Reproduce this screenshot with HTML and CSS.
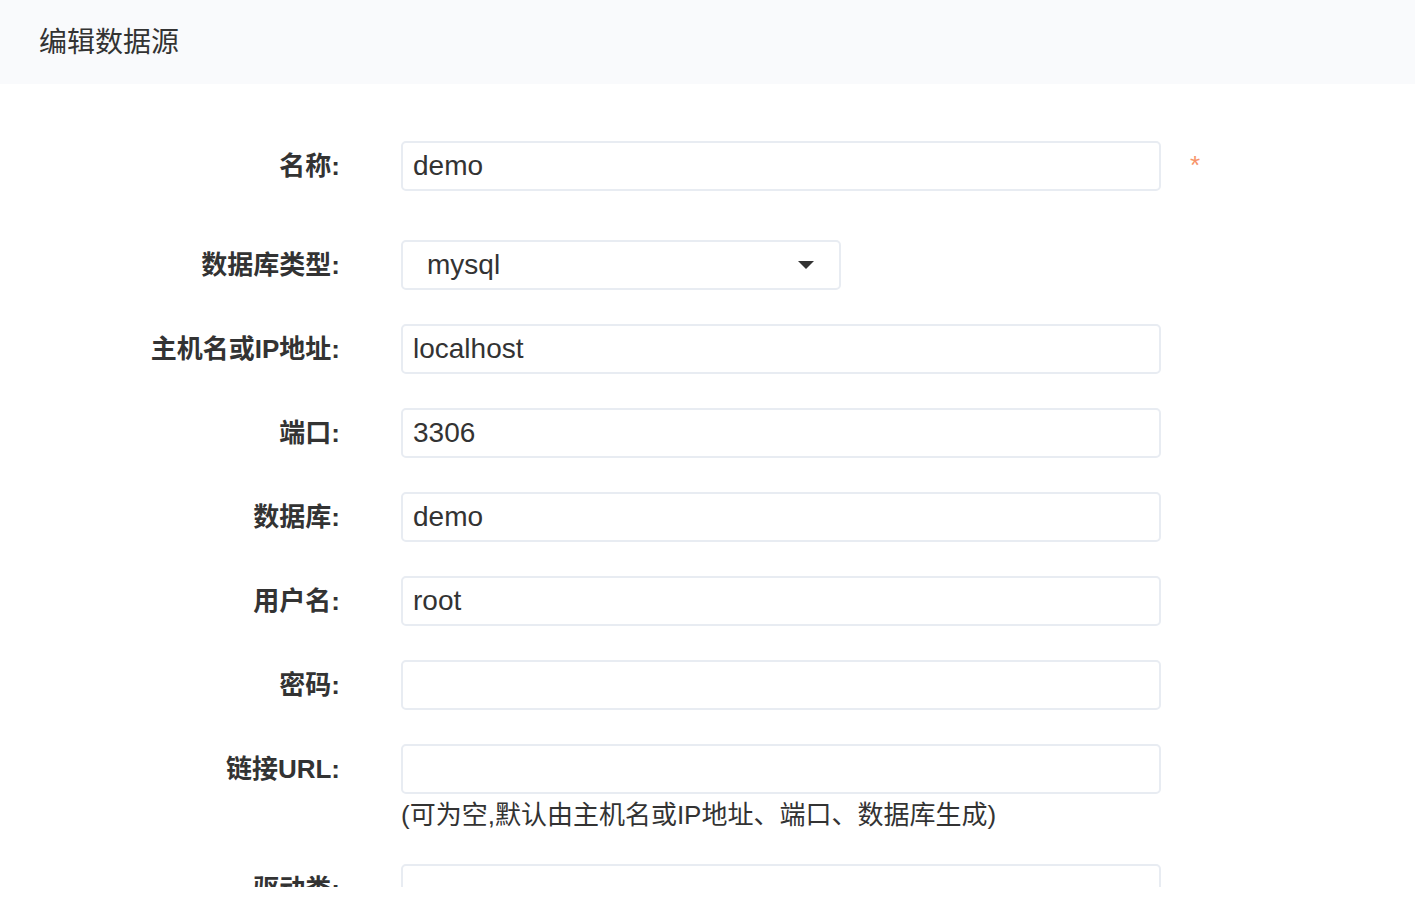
FILE: index.html
```html
<!DOCTYPE HTML>
<HTML>
	<HEAD>
		<meta charset="utf-8">
		<link rel="stylesheet" href="styles.css">
		<TITLE>编辑数据源</TITLE>
	</HEAD>
	<BODY>
		<DIV class="page">
			<DIV class="header">编辑数据源</DIV>
			<FORM class="form">
				<DIV class="row first">
					<label class="label">名称:</label>
					<input class="field" type="text" value="demo">
					<span class="required">*</span>
				</DIV>
				<DIV class="row">
					<label class="label">数据库类型:</label>
					<DIV class="select">
						<span>mysql</span>
						<span class="caret"></span>
					</DIV>
				</DIV>
				<DIV class="row">
					<label class="label">主机名或IP地址:</label>
					<input class="field" type="text" value="localhost">
				</DIV>
				<DIV class="row">
					<label class="label">端口:</label>
					<input class="field" type="text" value="3306">
				</DIV>
				<DIV class="row">
					<label class="label">数据库:</label>
					<input class="field" type="text" value="demo">
				</DIV>
				<DIV class="row">
					<label class="label">用户名:</label>
					<input class="field" type="text" value="root">
				</DIV>
				<DIV class="row">
					<label class="label">密码:</label>
					<input class="field" type="password" value="">
				</DIV>
				<DIV class="row">
					<label class="label">链接URL:</label>
					<input class="field" type="text" value="">
				</DIV>
				<DIV class="help">(可为空,默认由主机名或IP地址、端口、数据库生成)</DIV>
				<DIV class="row">
					<label class="label">驱动类:</label>
					<input class="field" type="text" value="">
				</DIV>
			</FORM>
		</DIV>
	</BODY>
</HTML>
```

FILE: styles.css
```css
body {
	margin: 0;
	background-color: #ffffff;
	font-family: "Liberation Sans", "Noto Sans CJK SC", sans-serif;
	color: #333333;
}

div.page {
	height: 887px;
	overflow: hidden;
}

div.header {
	height: 84px;
	padding-left: 39px;
	background-color: #f9fafc;
	font-family: "Noto Sans CJK SC", sans-serif;
	font-size: 28px;
	line-height: 81px;
	color: #333333;
}

form.form {
	padding-top: 57px;
}

div.row {
	display: flex;
	align-items: center;
	margin-bottom: 34px;
}

div.row.first {
	margin-bottom: 49px;
}

label.label {
	width: 340px;
	margin-right: 61px;
	padding-bottom: 5px;
	text-align: right;
	font-size: 26px;
	font-weight: bold;
	color: #333333;
}

input.field {
	box-sizing: border-box;
	width: 760px;
	height: 50px;
	margin: 0;
	padding: 0 10px;
	border: 2px solid #e8ecf2;
	border-radius: 5px;
	font-family: "Liberation Sans", sans-serif;
	font-size: 28px;
	color: #333333;
	background-color: #ffffff;
	outline: none;
}

span.required {
	margin-left: 29px;
	margin-top: -2px;
	font-size: 26px;
	line-height: 26px;
	color: #f7946a;
}

div.select {
	box-sizing: border-box;
	display: flex;
	align-items: center;
	justify-content: space-between;
	width: 440px;
	height: 50px;
	padding: 0 25px 0 24px;
	border: 2px solid #e8ecf2;
	border-radius: 5px;
	font-size: 28px;
	color: #333333;
}

span.caret {
	width: 0;
	height: 0;
	border-left: 8px solid transparent;
	border-right: 8px solid transparent;
	border-top: 8px solid #333333;
}

div.help {
	margin-top: -34px;
	margin-bottom: 31px;
	padding-top: 3px;
	padding-left: 401px;
	font-family: "Liberation Sans", "Noto Sans CJK SC", sans-serif;
	font-size: 26px;
	line-height: 36px;
	color: #333333;
}
```
